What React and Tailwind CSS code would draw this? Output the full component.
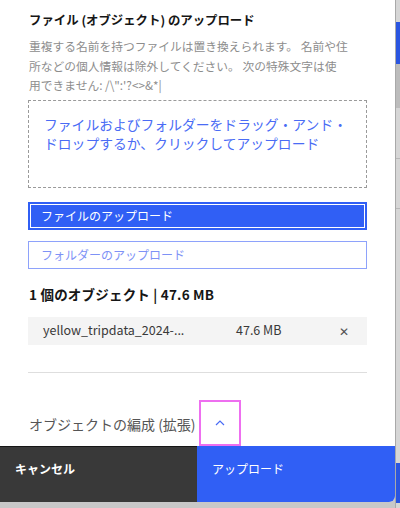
import React from "react";

const font = { fontFamily: '"Noto Sans CJK JP", "Noto Sans", sans-serif' };

export default function App() {
  return (
    <div className="w-[400px] h-[508px] bg-[#c8c8c8] flex overflow-hidden" style={font}>
      <div className="w-[395px] h-[502px] flex flex-col bg-white rounded-br-[6px] overflow-hidden">
        <div className="flex-1 px-[28px] pt-[10px] flex flex-col">
          <div className="text-[12.4px] leading-[20px] font-bold text-[#161616] pl-[1px]">
            ファイル (オブジェクト) のアップロード
          </div>
          <div className="mt-[6px] text-[11.75px] leading-[19.5px] text-[#8d8d8d] pl-[1px]">
            重複する名前を持つファイルは置き換えられます。 名前や住
            <br />
            所などの個人情報は除外してください。 次の特殊文字は使
            <br />
            用できません: /\":'?&lt;&gt;&amp;*|
          </div>
          <div className="mt-[5px] h-[88px] border border-dashed border-[#9a9a9a] pl-[15px] pt-[14px] text-[13.8px] leading-[19px] text-[#4a6cf5]">
            ファイルおよびフォルダーをドラッグ・アンド・
            <br />
            ドロップするか、クリックしてアップロード
          </div>
          <div className="mt-[14px] h-[28px] border-2 border-[#305ff5] bg-[#305ff5] shadow-[inset_0_0_0_1px_#ffffff] flex items-center pl-[11px] text-[12px] text-white">
            ファイルのアップロード
          </div>
          <div className="mt-[11px] h-[28px] border border-[#8ea2fb] bg-white flex items-center pl-[12px] text-[12px] text-[#7e92f6]">
            フォルダーのアップロード
          </div>
          <div className="mt-[15px] text-[13.5px] leading-[20px] font-bold text-[#161616] pl-[1px] tracking-[0.2px]">
            1 個のオブジェクト | 47.6 MB
          </div>
          <div className="mt-[13px] h-[28px] bg-[#f4f4f4] flex items-center text-[12.5px] text-[#393939]">
            <div className="w-[208px] pl-[15px]">yellow_tripdata_2024-...</div>
            <div className="flex-1">47.6 MB</div>
            <div className="w-[28px] text-[#525252] text-[12px]">✕</div>
          </div>
          <div className="mt-[27px] h-[1px] bg-[#dedede]" />
          <div className="mt-[27px] flex items-stretch">
            <div className="pl-[1px] text-[14px] leading-[20px] text-[#555555] self-center pt-[2px] w-[171px]">
              オブジェクトの編成 (拡張)
            </div>
            <div className="w-[42px] h-[46px] border-2 border-[#ee6ff0] flex items-center justify-center">
              <svg width="10" height="6" viewBox="0 0 10 6" fill="none">
                <path d="M1 5 L5 1 L9 5" stroke="#4a6cf5" strokeWidth="1.2" />
              </svg>
            </div>
          </div>
        </div>
        <div className="h-[56px] flex shrink-0">
          <div className="w-[197px] bg-[#393939] border-t border-[#161616] pl-[15px] pt-[13px] text-[12px] font-bold text-white">
            キャンセル
          </div>
          <div className="flex-1 bg-[#305ff5] pl-[15px] pt-[14px] text-[12px] text-white">
            アップロード
          </div>
        </div>
      </div>
      <div className="w-[5px] h-[508px] border-l border-[#a9a9a9] bg-[#d6d6d6] flex flex-col">
        <div className="h-[22px]" />
        <div className="h-[42px] bg-[#2a55e0]" />
        <div className="h-[44px] bg-[#bcbcbc]" />
        <div className="h-[50px]" />
        <div className="h-[1px] bg-[#b8b8b8]" />
        <div className="h-[49px]" />
        <div className="h-[1px] bg-[#b8b8b8]" />
        <div className="h-[254px]" />
        <div className="h-[40px] bg-[#2a55e0]" />
      </div>
    </div>
  );
}
